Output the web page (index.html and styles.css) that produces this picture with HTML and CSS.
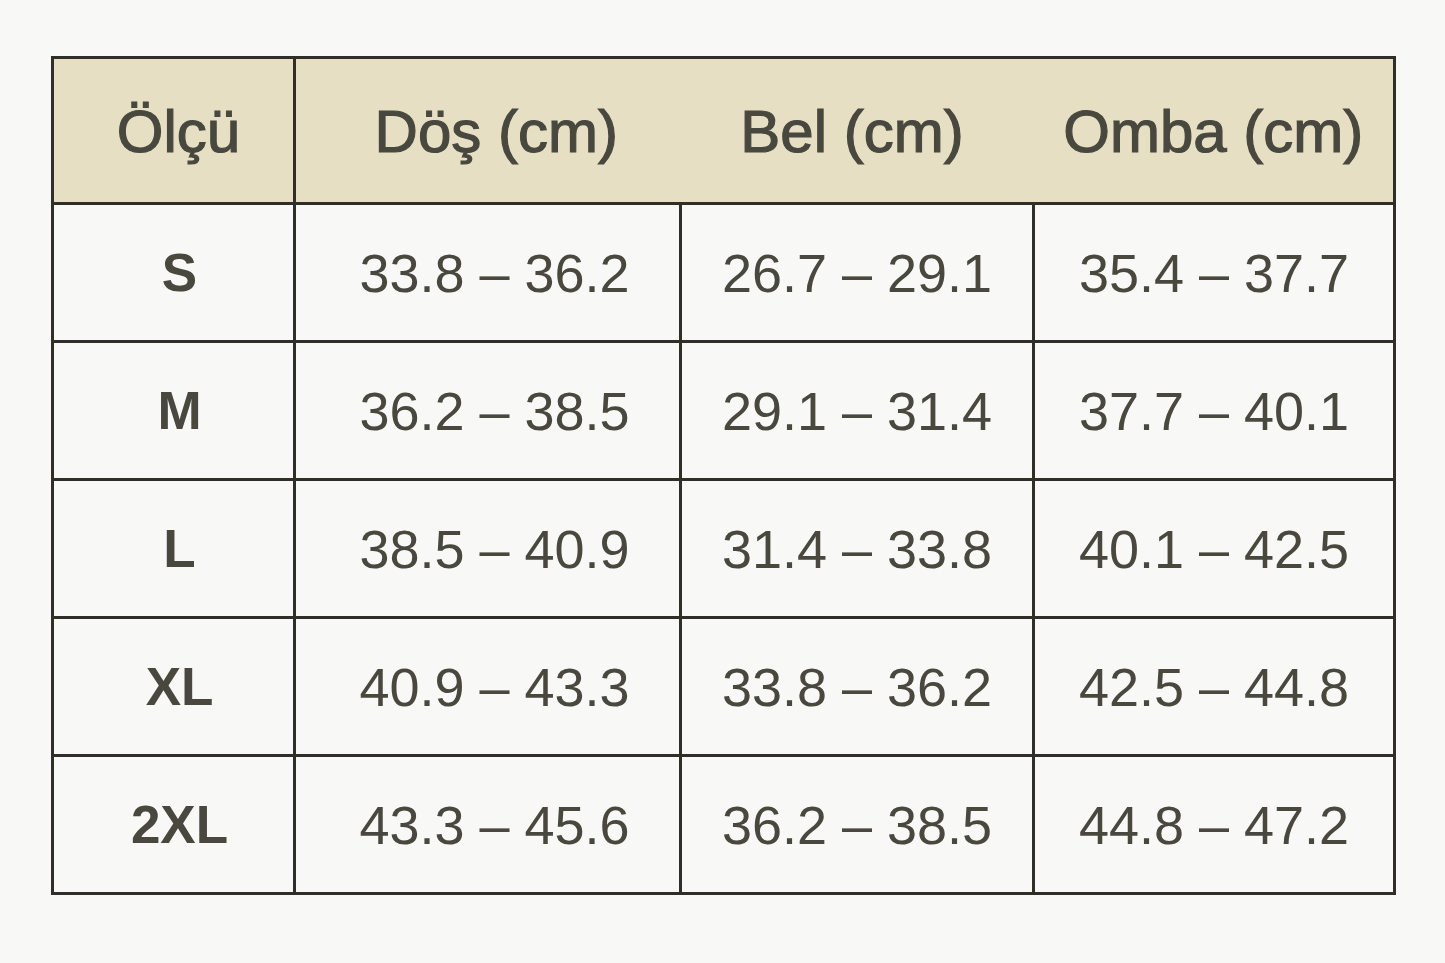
FILE: index.html
```html
<!DOCTYPE html>
<html lang="az">
<head>
<meta charset="utf-8">
<title>Ölçü cədvəli</title>
<link rel="stylesheet" href="styles.css">
</head>
<body>
<table class="sizes">
  <colgroup>
    <col class="c1"><col class="c2"><col class="c3"><col class="c4">
  </colgroup>
  <thead>
    <tr class="head">
      <th class="first">Ölçü</th>
      <th class="shift">Döş (cm)</th>
      <th class="h3">Bel (cm)</th>
      <th>Omba (cm)</th>
    </tr>
  </thead>
  <tbody>
    <tr><td class="size">S</td><td class="shift">33.8 – 36.2</td><td>26.7 – 29.1</td><td>35.4 – 37.7</td></tr>
    <tr><td class="size">M</td><td class="shift">36.2 – 38.5</td><td>29.1 – 31.4</td><td>37.7 – 40.1</td></tr>
    <tr><td class="size">L</td><td class="shift">38.5 – 40.9</td><td>31.4 – 33.8</td><td>40.1 – 42.5</td></tr>
    <tr><td class="size">XL</td><td class="shift">40.9 – 43.3</td><td>33.8 – 36.2</td><td>42.5 – 44.8</td></tr>
    <tr><td class="size">2XL</td><td class="shift">43.3 – 45.6</td><td>36.2 – 38.5</td><td>44.8 – 47.2</td></tr>
  </tbody>
</table>
</body>
</html>
```
FILE: styles.css
```css
html, body {
  margin: 0;
  padding: 0;
  background: #f8f8f6;
}
body {
  font-family: "Liberation Sans", Arial, sans-serif;
  color: #48483f;
  padding: 56px 0 0 51px;
}
.sizes {
  border-collapse: collapse;
  table-layout: fixed;
  width: 1342px;
  border: 3px solid #2f2e28;
}
.c1 { width: 242px; }
.c2 { width: 386px; }
.c3 { width: 353px; }
.c4 { width: 361px; }
.sizes th, .sizes td {
  padding: 0;
  text-align: center;
  vertical-align: middle;
}
.head {
  height: 146px;
  background: #e6dfc4;
}
.head th {
  font-size: 60px;
  font-weight: 400;
  -webkit-text-stroke: 1.2px #48483f;
  border-bottom: 3px solid #2f2e28;
  padding-top: 2px;
}
.head th.first {
  border-right: 3px solid #2f2e28;
  padding-left: 10px;
}
.head th.shift { padding-left: 16px; }
.head th.h3 { padding-right: 10px; }
.sizes tbody tr { height: 138px; }
.sizes td {
  font-size: 54px;
  border: 3px solid #2f2e28;
}
.sizes td.size {
  font-weight: 700;
  font-size: 53px;
  padding-left: 12px;
}
.sizes td.shift { padding-left: 14px; }
```
